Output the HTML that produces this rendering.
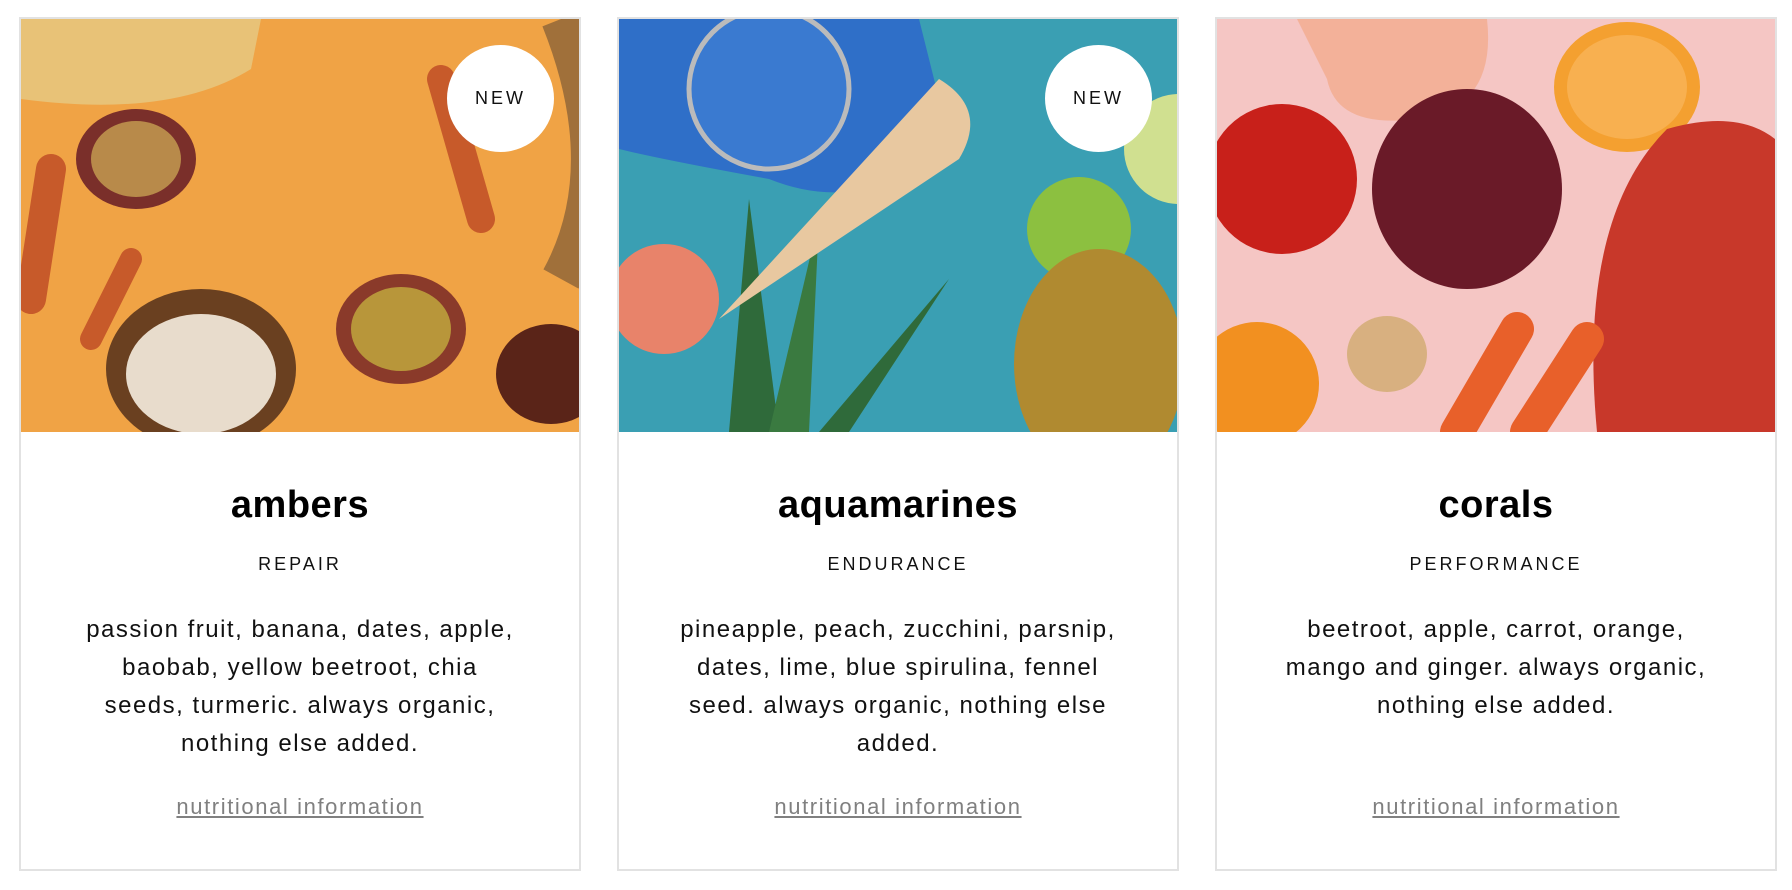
<!DOCTYPE html>
<html><head><meta charset="utf-8"><style>
*{box-sizing:border-box;margin:0;padding:0}
body{width:1792px;height:890px;background:#fff;font-family:"Liberation Sans",sans-serif;position:relative;overflow:hidden}
.card{position:absolute;top:17px;width:562px;height:854px;border:2px solid #e2e2e2;text-align:center}
.img{position:absolute;left:0;top:0;width:558px;height:413px;overflow:hidden}
.badge{position:absolute;right:25px;top:26px;width:107px;height:107px;border-radius:50%;background:#fff;font-size:18px;letter-spacing:3px;line-height:107px;color:#111}
h2{position:absolute;top:465px;left:0;right:0;font-size:38px;font-weight:bold;color:#000;letter-spacing:0.5px}
.sub{position:absolute;top:535px;left:0;right:0;font-size:18px;letter-spacing:3px;color:#111}
.desc{position:absolute;top:592px;left:0;right:0;font-size:24px;line-height:38px;color:#111;letter-spacing:1.5px;white-space:nowrap}
.link{position:absolute;top:775px;left:0;right:0;font-size:22px;color:#808080;text-decoration:underline;letter-spacing:1.6px}
</style></head><body>

<div class="card" style="left:19px">
<div class="img" style="background:#f0a345">
<svg width="558" height="413">
<path d="M0 0H240L230 50Q150 100 0 80Z" fill="#e8c277"/>
<ellipse cx="115" cy="140" rx="60" ry="50" fill="#7a2f2a"/><ellipse cx="115" cy="140" rx="45" ry="38" fill="#b88a4a"/>
<ellipse cx="380" cy="310" rx="65" ry="55" fill="#8a3a2a"/><ellipse cx="380" cy="310" rx="50" ry="42" fill="#b8963a"/>
<ellipse cx="530" cy="355" rx="55" ry="50" fill="#5a2418"/>
<ellipse cx="180" cy="350" rx="95" ry="80" fill="#6a4020"/><ellipse cx="180" cy="355" rx="75" ry="60" fill="#e8dccc"/>
<path d="M30 150L10 280" stroke="#c75a2a" stroke-width="30" stroke-linecap="round"/>
<path d="M110 240L70 320" stroke="#c75a2a" stroke-width="22" stroke-linecap="round"/>
<path d="M420 60L460 200" stroke="#c75a2a" stroke-width="28" stroke-linecap="round"/>
<path d="M540 0Q600 150 540 260" stroke="#a0703a" stroke-width="40" fill="none"/>
</svg>
<div class="badge">NEW</div></div>
<h2>ambers</h2><div class="sub">REPAIR</div>
<div class="desc">passion fruit, banana, dates, apple,<br>baobab, yellow beetroot, chia<br>seeds, turmeric. always organic,<br>nothing else added.</div>
<div class="link">nutritional information</div>
</div>

<div class="card" style="left:617px">
<div class="img" style="background:#3a9fb3">
<svg width="558" height="413">
<path d="M0 0H300L330 120Q250 200 150 160Q40 140 0 130Z" fill="#2f6fc8"/>
<circle cx="150" cy="70" r="80" fill="#3a7ad0" stroke="#bbb" stroke-width="5"/>
<circle cx="45" cy="280" r="55" fill="#e8836a"/>
<path d="M110 413L130 180L160 413Z" fill="#2f6a3a"/><path d="M150 413L200 200L190 413Z" fill="#3a7a40"/><path d="M200 413L330 260L230 413Z" fill="#2f6a3a"/>
<path d="M100 300L320 60Q370 90 340 140Z" fill="#e8c8a0"/>
<circle cx="460" cy="210" r="52" fill="#8cc040"/>
<ellipse cx="480" cy="345" rx="85" ry="115" fill="#b08a30"/>
<circle cx="560" cy="130" r="55" fill="#d0e090"/>
</svg>
<div class="badge">NEW</div></div>
<h2>aquamarines</h2><div class="sub">ENDURANCE</div>
<div class="desc">pineapple, peach, zucchini, parsnip,<br>dates, lime, blue spirulina, fennel<br>seed. always organic, nothing else<br>added.</div>
<div class="link">nutritional information</div>
</div>

<div class="card" style="left:1215px">
<div class="img" style="background:#f5c6c4">
<svg width="558" height="413">
<path d="M80 0H270Q280 90 200 100Q120 110 110 60Z" fill="#f2a888" opacity=".7"/>
<circle cx="65" cy="160" r="75" fill="#c8201a"/>
<ellipse cx="250" cy="170" rx="95" ry="100" fill="#6a1a28"/>
<ellipse cx="410" cy="68" rx="73" ry="65" fill="#f4a030"/><ellipse cx="410" cy="68" rx="60" ry="52" fill="#f8b050"/>
<path d="M380 413Q360 200 450 110Q520 90 558 120V413Z" fill="#c8382a"/>
<circle cx="40" cy="365" r="62" fill="#f29020"/>
<ellipse cx="170" cy="335" rx="40" ry="38" fill="#d8b080"/>
<path d="M240 413L300 310M310 413L370 320" stroke="#e8602a" stroke-width="34" stroke-linecap="round"/>
</svg></div>
<h2>corals</h2><div class="sub">PERFORMANCE</div>
<div class="desc">beetroot, apple, carrot, orange,<br>mango and ginger. always organic,<br>nothing else added.</div>
<div class="link">nutritional information</div>
</div>

</body></html>
